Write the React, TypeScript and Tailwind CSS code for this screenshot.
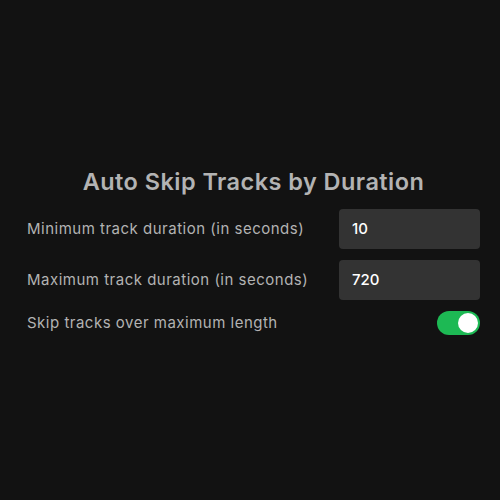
import React from "react";

export default function App() {
  return (
    <div className="w-[500px] h-[500px] bg-[#121212] overflow-hidden" style={{ fontFamily: "Inter, 'Noto Sans', sans-serif" }}>
      <div className="pt-[166px] pl-[27px] pr-[20px] flex flex-col">
        <h1 className="text-center text-[23.5px] leading-[32px] font-semibold tracking-[0.45px] text-[#b3b3b3]">Auto Skip Tracks by Duration</h1>
        <div className="mt-[11px] flex items-center justify-between h-[40px]">
          <span className="text-[15px] tracking-[0.5px] text-[#b3b3b3]">Minimum track duration (in seconds)</span>
          <div className="w-[141px] h-[40px] rounded-[4px] bg-[#333333] flex items-center px-[13px] text-[15px] font-medium text-white">10</div>
        </div>
        <div className="mt-[11px] flex items-center justify-between h-[40px]">
          <span className="text-[15px] tracking-[0.5px] text-[#b3b3b3]">Maximum track duration (in seconds)</span>
          <div className="w-[141px] h-[40px] rounded-[4px] bg-[#333333] flex items-center px-[13px] text-[15px] font-medium text-white">720</div>
        </div>
        <div className="mt-[10px] flex items-center justify-between h-[26px]">
          <span className="text-[15px] tracking-[0.5px] text-[#b3b3b3]">Skip tracks over maximum length</span>
          <div className="w-[43px] h-[24px] rounded-full bg-[#1db954] flex items-center justify-end pr-[2px]">
            <div className="w-[20px] h-[20px] rounded-full bg-white" />
          </div>
        </div>
      </div>
    </div>
  );
}
